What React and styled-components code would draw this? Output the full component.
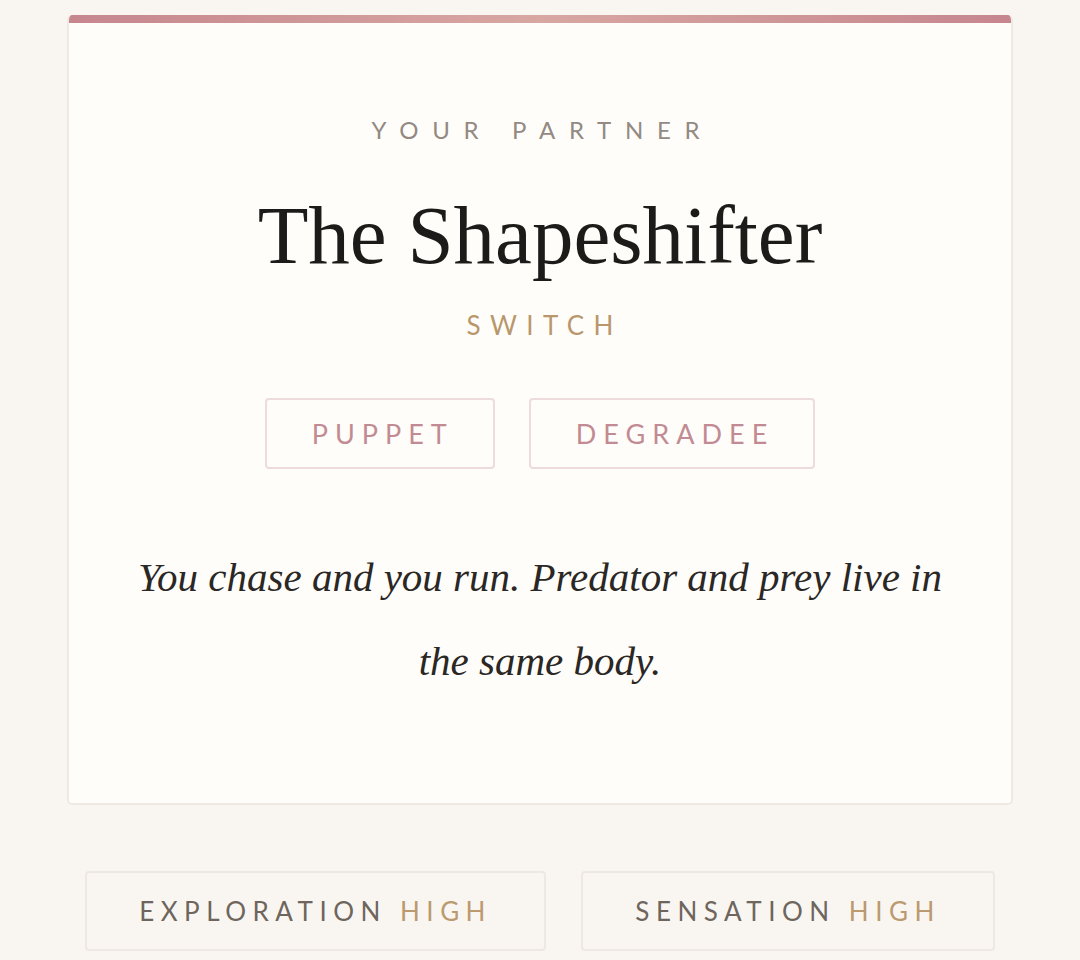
import React from 'react'
import styled, { createGlobalStyle } from 'styled-components'

const GlobalStyle = createGlobalStyle`
  html, body {
    margin: 0;
    padding: 0;
    background: #f9f6f2;
  }
  * {
    box-sizing: border-box;
  }
`

const partner = {
  eyebrow: 'Your Partner',
  name: 'The Shapeshifter',
  role: 'Switch',
  tags: ['Puppet', 'Degradee'],
  quote: 'You chase and you run. Predator and prey live in the same body.',
  stats: [
    { label: 'Exploration', value: 'High' },
    { label: 'Sensation', value: 'High' }
  ]
}

const App = () => {
  return (
    <React.Fragment>
      <GlobalStyle />
      <Page>
        <Card>
          <Eyebrow>{partner.eyebrow}</Eyebrow>
          <Title>{partner.name}</Title>
          <Role>{partner.role}</Role>
          <TagRow>
            {partner.tags.map(tag => (
              <Tag key={tag}>{tag}</Tag>
            ))}
          </TagRow>
          <Quote>{partner.quote}</Quote>
        </Card>

        <StatRow>
          {partner.stats.map(stat => (
            <Stat key={stat.label}>
              {stat.label} <StatValue>{stat.value}</StatValue>
            </Stat>
          ))}
        </StatRow>
      </Page>
    </React.Fragment>
  )
}

const Page = styled.main`
  padding: 15px 67px 0;
  font-family: Lato, "Open Sans", sans-serif;
`

const Card = styled.section`
  background: #fffdf9;
  border: 2px solid #efe9e4;
  border-top: none;
  border-radius: 5px;
  overflow: hidden;
  display: flex;
  flex-direction: column;
  align-items: center;
  padding: 0 60px 100px;
  &::before {
    content: '';
    align-self: stretch;
    height: 8px;
    margin: 0 -62px;
    background: linear-gradient(90deg, #c6868e 0%, #d8a7a2 50%, #c6868e 100%);
  }
`

const Eyebrow = styled.div`
  margin-top: 92px;
  font-size: 24px;
  line-height: 30px;
  letter-spacing: 0.57em;
  margin-right: -0.2em;
  text-transform: uppercase;
  color: #928a83;
`

const Title = styled.h1`
  margin: 42px 0 0;
  font-family: "Liberation Serif", "DejaVu Serif", serif;
  font-weight: 400;
  font-size: 83px;
  line-height: 96px;
  color: #1d1b19;
`

const Role = styled.div`
  margin-top: 26px;
  font-size: 26px;
  line-height: 32px;
  letter-spacing: 0.36em;
  margin-right: -0.36em;
  text-transform: uppercase;
  color: #b9976d;
`

const TagRow = styled.div`
  display: flex;
  gap: 34px;
  margin-top: 57px;
`

const Tag = styled.span`
  display: flex;
  align-items: center;
  justify-content: center;
  height: 71px;
  padding: 0 39px 0 45px;
  border: 2px solid #eedcdc;
  border-radius: 4px;
  font-size: 27px;
  letter-spacing: 0.26em;
  text-transform: uppercase;
  color: #c28b93;
`

const Quote = styled.p`
  margin: 66px 0 0;
  max-width: 826px;
  font-family: "Liberation Serif", "DejaVu Serif", serif;
  font-style: italic;
  font-size: 41px;
  line-height: 84px;
  text-align: center;
  color: #2a2725;
`

const StatRow = styled.div`
  display: flex;
  gap: 35px;
  padding: 0 18px;
  margin-top: 66px;
`

const Stat = styled.div`
  flex: 1 1 auto;
  height: 80px;
  display: flex;
  align-items: center;
  justify-content: center;
  border: 2px solid #ede8e2;
  border-radius: 4px;
  font-size: 26px;
  letter-spacing: 0.25em;
  text-transform: uppercase;
  color: #6e655d;
  white-space: pre;
`

const StatValue = styled.span`
  color: #bb9a70;
`

export default App
